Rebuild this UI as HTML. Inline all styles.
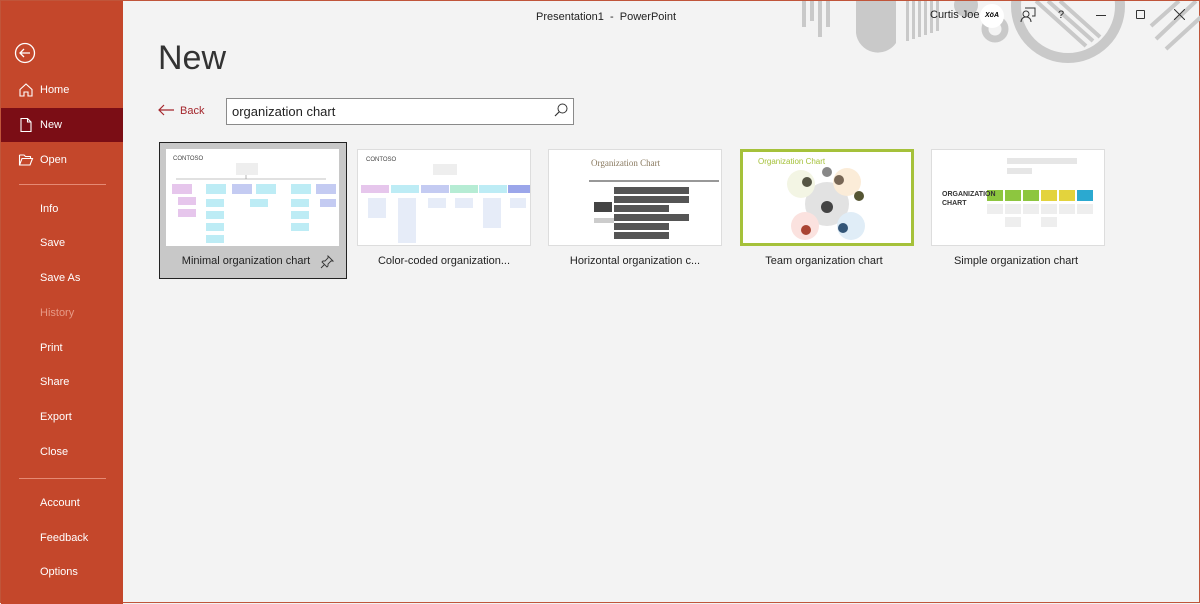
<!DOCTYPE html>
<html><head><meta charset="utf-8"><style>
*{margin:0;padding:0;box-sizing:border-box}
body{width:1200px;height:603px;overflow:hidden;background:#f3f3f3;font-family:"Liberation Sans",sans-serif;position:relative;border:1px solid #c0553a}
.side{position:absolute;left:0;top:0;width:122px;height:603px;background:#c4472b;color:#fff}
.it{position:absolute;left:0;width:122px;height:34px;font-size:11px;line-height:34px;padding-left:39px}
.it svg{position:absolute;left:17px;top:9px}
.sel{background:#7b0d15}
.div{position:absolute;left:18px;width:87px;height:1px;background:#e58a74}
.t{position:absolute;font-size:11px;color:#222}
.thumb{position:absolute;top:148px;width:174px;height:97px;background:#fff;border:1px solid #ddd;overflow:hidden}
.lbl{position:absolute;top:254px;font-size:11px;color:#222;text-align:center;width:174px}
.b{position:absolute}
</style></head><body>
<div class="side">
<svg style="position:absolute;left:13px;top:41px" width="22" height="22" viewBox="0 0 22 22"><circle cx="11" cy="11" r="9.5" fill="none" stroke="#fff" stroke-width="1.3"/><path d="M16 11H6M10 7l-4 4 4 4" fill="none" stroke="#fff" stroke-width="1.3"/></svg>
<div class="it" style="top:72px"><svg width="16" height="16" viewBox="0 0 16 16"><path d="M2 7.5L8 2l6 5.5V14H10V10H6v4H2z" fill="none" stroke="#fff" stroke-width="1.1"/></svg>Home</div>
<div class="it sel" style="top:107px"><svg width="16" height="16" viewBox="0 0 16 16"><path d="M3 1.5h6.5l3.5 3.5v9.5H3z M9.5 1.5V5H13" fill="none" stroke="#fff" stroke-width="1.1"/></svg>New</div>
<div class="it" style="top:142px"><svg width="16" height="16" viewBox="0 0 16 16"><path d="M1.5 3h4.5l1.5 1.5h5v2M1.5 3v10h10.5l2.5-6.5H4L1.5 13" fill="none" stroke="#fff" stroke-width="1.1"/></svg>Open</div>
<div class="div" style="top:183px"></div>
<div class="it" style="top:191px">Info</div>
<div class="it" style="top:225px">Save</div>
<div class="it" style="top:260px">Save As</div>
<div class="it" style="top:295px;color:#e79a86">History</div>
<div class="it" style="top:330px">Print</div>
<div class="it" style="top:364px">Share</div>
<div class="it" style="top:399px">Export</div>
<div class="it" style="top:434px">Close</div>
<div class="div" style="top:477px"></div>
<div class="it" style="top:485px">Account</div>
<div class="it" style="top:520px">Feedback</div>
<div class="it" style="top:554px">Options</div>
</div>
<svg class="b" style="left:795px;top:0" width="405" height="70" viewBox="0 0 405 70">
<g fill="#c9c9c9"><rect x="6" y="0" width="4" height="26"/><rect x="14" y="0" width="4" height="20"/><rect x="22" y="0" width="4" height="36"/><rect x="30" y="0" width="4" height="26"/>
<path d="M60 0h40v42a22 22 0 0 1-40-10z"/>
<rect x="110" y="0" width="3" height="40"/><rect x="116" y="0" width="3" height="38"/><rect x="122" y="0" width="3" height="36"/><rect x="128" y="0" width="3" height="34"/><rect x="134" y="0" width="3" height="32"/><rect x="140" y="0" width="3" height="30"/>
<circle cx="170" cy="4" r="12"/></g>
<circle cx="199" cy="28" r="10" fill="none" stroke="#c9c9c9" stroke-width="7"/>
<circle cx="272" cy="5" r="52" fill="none" stroke="#c9c9c9" stroke-width="10"/>
<g stroke="#c9c9c9" stroke-width="4"><path d="M240 0l50 45M252 0l45 40M264 0l40 36M355 25l28-25M360 38l40-38M370 48l35-32"/></g>
</svg>
<div class="t" style="left:535px;top:10px">Presentation1&nbsp; -&nbsp; PowerPoint</div>
<div class="t" style="left:929px;top:8px">Curtis Joe</div>
<div class="b" style="left:979px;top:3px;width:24px;height:24px;border-radius:50%;background:#fff;font-size:7px;font-style:italic;font-weight:bold;text-align:center;line-height:24px">XöA</div>
<svg class="b" style="left:1019px;top:6px" width="16" height="16" viewBox="0 0 16 16"><circle cx="6" cy="7" r="3" fill="none" stroke="#333"/><path d="M1 15c0-3 2-5 5-5s5 2 5 5M5 1h10v8h-3" fill="none" stroke="#333"/></svg>
<div class="t" style="left:1057px;top:8px">?</div>
<div class="b" style="left:1095px;top:14px;width:10px;height:1px;background:#333"></div>
<div class="b" style="left:1135px;top:9px;width:9px;height:9px;border:1px solid #333;border-radius:1px"></div>
<svg class="b" style="left:1173px;top:8px" width="11" height="11"><path d="M0 0l11 11M11 0L0 11" stroke="#333"/></svg>

<div class="b" style="left:157px;top:38px;font-size:34px;color:#333">New</div>
<svg class="b" style="left:157px;top:103px" width="16" height="12"><path d="M16 6H1M6 1L1 6l5 5" fill="none" stroke="#a4262c" stroke-width="1.2"/></svg>
<div class="b" style="left:179px;top:104px;font-size:11px;color:#a4262c">Back</div>
<div class="b" style="left:225px;top:97px;width:348px;height:27px;background:#fff;border:1px solid #8a8a8a;font-size:13px;line-height:25px;padding-left:5px;color:#222">organization chart</div>
<svg class="b" style="left:553px;top:102px" width="14" height="14"><circle cx="8.5" cy="5.5" r="4.5" fill="none" stroke="#333"/><path d="M5.5 8.5L1 13" stroke="#333" stroke-width="1.2"/></svg>

<div class="b" style="left:158px;top:141px;width:188px;height:137px;background:#c8c8c8;border:1.5px solid #222"></div>
<div class="thumb" style="left:165px;top:148px;width:173px;border:none">
<div class="b" style="left:7px;top:7px;font-size:6px;color:#444">CONTOSO</div>
<svg width="173" height="97"><g fill="#e6c6ec"><rect x="6" y="35" width="20" height="10"/><rect x="12" y="48" width="18" height="8"/><rect x="12" y="60" width="18" height="8"/></g><g fill="#bdecf5"><rect x="40" y="35" width="20" height="10"/><rect x="40" y="50" width="18" height="8"/><rect x="40" y="62" width="18" height="8"/><rect x="40" y="74" width="18" height="8"/><rect x="40" y="86" width="18" height="8"/><rect x="90" y="35" width="20" height="10"/><rect x="84" y="50" width="18" height="8"/><rect x="125" y="35" width="20" height="10"/><rect x="125" y="50" width="18" height="8"/><rect x="125" y="62" width="18" height="8"/><rect x="125" y="74" width="18" height="8"/></g><g fill="#c4cbf2"><rect x="150" y="35" width="20" height="10"/><rect x="154" y="50" width="16" height="8"/><rect x="66" y="35" width="20" height="10"/></g><rect x="70" y="14" width="22" height="12" fill="#eee"/><path d="M10 30h150M80 26v4" stroke="#888" stroke-width=".6"/></svg></div>
<div class="thumb" style="left:356px">
<div class="b" style="left:8px;top:7px;font-size:6px;color:#444">CONTOSO</div>
<svg width="174" height="97"><rect x="75" y="14" width="24" height="11" fill="#eee"/><rect x="3" y="35" width="28" height="8" fill="#e6c6ec"/><rect x="33" y="35" width="28" height="8" fill="#bdecf5"/><rect x="63" y="35" width="28" height="8" fill="#c4cbf2"/><rect x="92" y="35" width="28" height="8" fill="#b6ecd4"/><rect x="121" y="35" width="28" height="8" fill="#bdecf5"/><rect x="150" y="35" width="22" height="8" fill="#9ba6ea"/><g fill="#e6ecf8"><rect x="10" y="48" width="18" height="20"/><rect x="40" y="48" width="18" height="45"/><rect x="70" y="48" width="18" height="10"/><rect x="97" y="48" width="18" height="10"/><rect x="125" y="48" width="18" height="30"/><rect x="152" y="48" width="16" height="10"/></g></svg></div>
<div class="thumb" style="left:547px">
<div class="b" style="left:42px;top:8px;font-size:9px;font-family:'Liberation Serif',serif;color:#8a7a60">Organization Chart</div>
<svg width="174" height="97"><path d="M40 31h130" stroke="#777" stroke-width="1.5"/><rect x="45" y="52" width="18" height="10" fill="#444"/><g fill="#555"><rect x="65" y="37" width="75" height="7"/><rect x="65" y="46" width="75" height="7"/><rect x="65" y="55" width="55" height="7"/><rect x="65" y="64" width="75" height="7"/><rect x="65" y="73" width="55" height="7"/><rect x="65" y="82" width="55" height="7"/></g><rect x="45" y="68" width="20" height="5" fill="#ccc"/></svg></div>
<div class="thumb" style="left:739px;border:3px solid #a5c13a">
<div class="b" style="left:15px;top:5px;font-size:8px;color:#a5c13a">Organization Chart</div>
<svg width="168" height="91"><circle cx="84" cy="52" r="22" fill="#e2e2e2"/><circle cx="58" cy="32" r="14" fill="#f3f5e4"/><circle cx="104" cy="30" r="14" fill="#fbecd8"/><circle cx="62" cy="74" r="14" fill="#fbe2df"/><circle cx="108" cy="74" r="14" fill="#e0edf7"/><circle cx="84" cy="55" r="6" fill="#444"/><circle cx="64" cy="30" r="5" fill="#554"/><circle cx="96" cy="28" r="5" fill="#765"/><circle cx="116" cy="44" r="5" fill="#553"/><circle cx="63" cy="78" r="5" fill="#a43"/><circle cx="100" cy="76" r="5" fill="#357"/><circle cx="84" cy="20" r="5" fill="#888"/></svg></div>
<div class="thumb" style="left:930px">
<div class="b" style="left:10px;top:40px;font-size:7px;font-weight:bold;line-height:9px;color:#333">ORGANIZATION<br>CHART</div>
<svg width="174" height="97"><rect x="75" y="8" width="70" height="6" fill="#e6e6e6"/><rect x="75" y="18" width="25" height="6" fill="#e6e6e6"/><rect x="55" y="40" width="16" height="11" fill="#8dc63f"/><rect x="73" y="40" width="16" height="11" fill="#8dc63f"/><rect x="91" y="40" width="16" height="11" fill="#8dc63f"/><rect x="109" y="40" width="16" height="11" fill="#e3d33d"/><rect x="127" y="40" width="16" height="11" fill="#e3d33d"/><rect x="145" y="40" width="16" height="11" fill="#2ba9d0"/><g fill="#eee"><rect x="55" y="54" width="16" height="10"/><rect x="73" y="54" width="16" height="10"/><rect x="91" y="54" width="16" height="10"/><rect x="109" y="54" width="16" height="10"/><rect x="127" y="54" width="16" height="10"/><rect x="145" y="54" width="16" height="10"/><rect x="73" y="67" width="16" height="10"/><rect x="109" y="67" width="16" height="10"/></g></svg></div>

<div class="lbl" style="left:165px;width:160px">Minimal organization chart</div>
<svg class="b" style="left:319px;top:254px" width="14" height="14" viewBox="0 0 14 14"><path d="M8 1l5 5-2 0-3 3 0 2-1 1-5-5 1-1 2 0 3-3zM4.5 9.5L1 13" fill="none" stroke="#333" stroke-width=".9"/></svg>
<div class="lbl" style="left:356px">Color-coded organization...</div>
<div class="lbl" style="left:547px">Horizontal organization c...</div>
<div class="lbl" style="left:736px">Team organization chart</div>
<div class="lbl" style="left:928px">Simple organization chart</div>
</body></html>
